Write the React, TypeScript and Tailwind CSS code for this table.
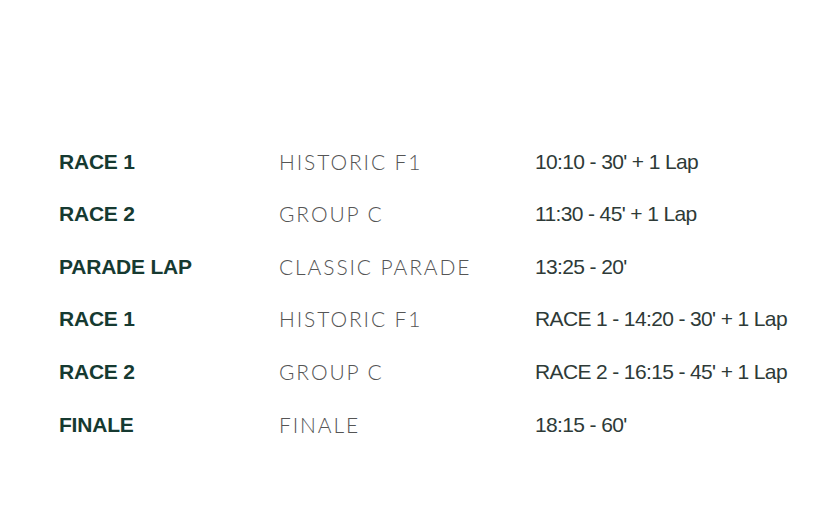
const rows = [
  { name: "RACE 1", series: "HISTORIC F1", time: "10:10 - 30' + 1 Lap" },
  { name: "RACE 2", series: "GROUP C", time: "11:30 - 45' + 1 Lap" },
  { name: "PARADE LAP", series: "CLASSIC PARADE", time: "13:25 - 20'" },
  { name: "RACE 1", series: "HISTORIC F1", time: "RACE 1 - 14:20 - 30' + 1 Lap" },
  { name: "RACE 2", series: "GROUP C", time: "RACE 2 - 16:15 - 45' + 1 Lap" },
  { name: "FINALE", series: "FINALE", time: "18:15 - 60'" },
];

export default function App() {
  return (
    <div className="w-[825px] h-[510px] bg-white font-['Liberation_Sans',Arial,sans-serif]">
      <div className="pt-[135px] pl-[59px] flex flex-col">
        {rows.map((row, i) => (
          <div key={i} className="flex items-center h-[52.6px]">
            <div className="w-[220px] text-[21px] font-bold tracking-[-0.01em] text-[#163a31]">
              {row.name}
            </div>
            <div className="w-[256px] text-[21px] font-['Lato',sans-serif] font-light tracking-[0.09em] text-[#555]">
              {row.series}
            </div>
            <div className="text-[21px] tracking-[-0.03em] text-[#2e3a37]">
              {row.time}
            </div>
          </div>
        ))}
      </div>
    </div>
  );
}
